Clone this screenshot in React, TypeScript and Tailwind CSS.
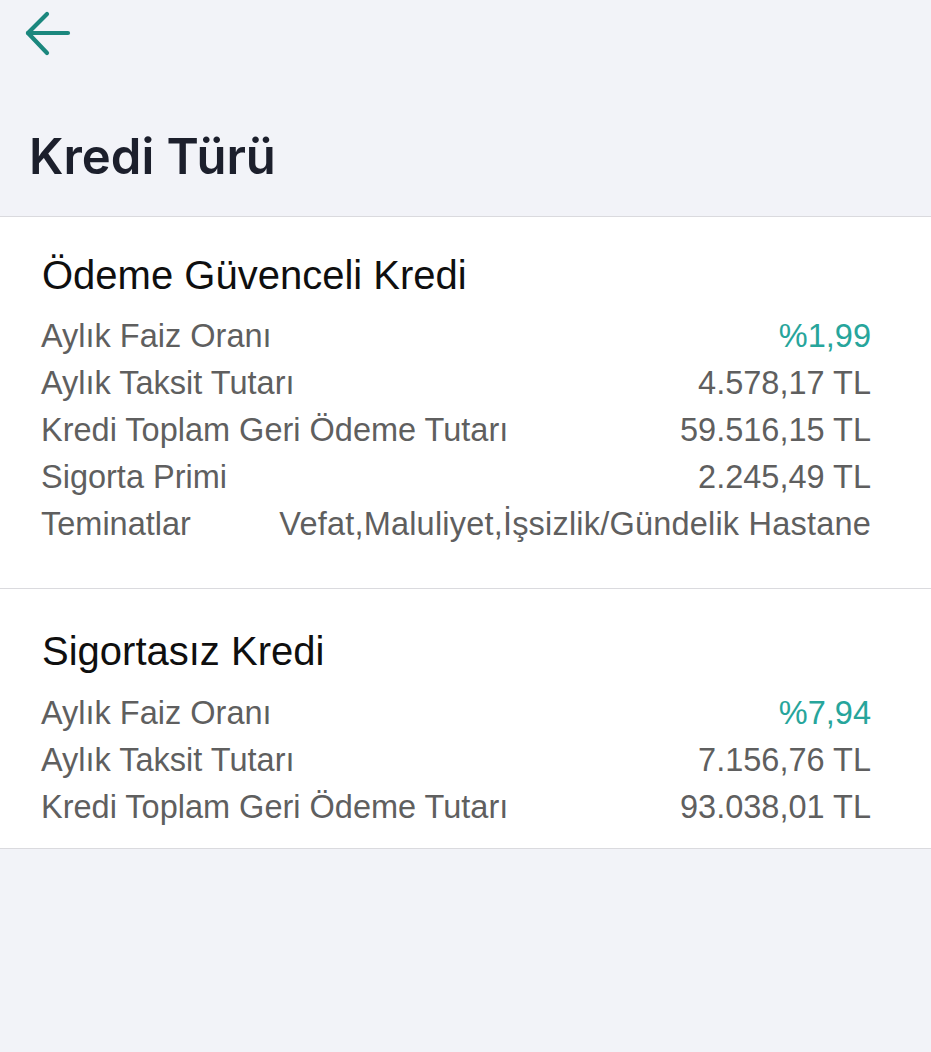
import React from "react";

type Row = { label: string; value: string; accent?: boolean };

const guvenceli: Row[] = [
  { label: "Aylık Faiz Oranı", value: "%1,99", accent: true },
  { label: "Aylık Taksit Tutarı", value: "4.578,17 TL" },
  { label: "Kredi Toplam Geri Ödeme Tutarı", value: "59.516,15 TL" },
  { label: "Sigorta Primi", value: "2.245,49 TL" },
  { label: "Teminatlar", value: "Vefat,Maluliyet,İşsizlik/Gündelik Hastane" },
];

const sigortasiz: Row[] = [
  { label: "Aylık Faiz Oranı", value: "%7,94", accent: true },
  { label: "Aylık Taksit Tutarı", value: "7.156,76 TL" },
  { label: "Kredi Toplam Geri Ödeme Tutarı", value: "93.038,01 TL" },
];

function DetailRows({ rows }: { rows: Row[] }) {
  return (
    <div className="flex flex-col">
      {rows.map((r) => (
        <div key={r.label} className="flex items-center justify-between h-[47px] text-[32.5px] leading-[47px] text-[#5f5f5f]">
          <span>{r.label}</span>
          <span className={r.accent ? "text-[#27a59b]" : r.value.length > 20 ? "tracking-[0.2px]" : ""}>{r.value}</span>
        </div>
      ))}
    </div>
  );
}

export default function App() {
  return (
    <div className="min-h-[1052px] bg-[#f2f3f8] font-['Liberation_Sans',Arial,sans-serif]">
      <div className="flex flex-col pt-[11px] pb-[29px] border-b border-[#dadade]">
        <button className="ml-[25px] w-[46px] h-[46px]">
          <svg width="46" height="46" viewBox="0 0 46 46" fill="none" stroke="#1b877e" strokeWidth="4.2" strokeLinecap="round" strokeLinejoin="round">
            <path d="M3 22H43" />
            <path d="M22 3L3 22L22 42" />
          </svg>
        </button>
        <h1 className="mt-[70px] ml-[29px] font-['Inter',sans-serif] font-semibold text-[49px] leading-[60px] text-[#1c1f2c]">
          Kredi Türü
        </h1>
      </div>

      <section className="bg-white pl-[41px] pr-[60px] pt-[36px] pb-[40px] border-b border-[#dadade]">
        <h2 className="text-[40px] leading-[44px] text-[#0f0f0f] ml-[1px] mb-[16px]">Ödeme Güvenceli Kredi</h2>
        <DetailRows rows={guvenceli} />
      </section>

      <section className="bg-white pl-[41px] pr-[60px] pt-[40px] pb-[17px] border-b border-[#dadade]">
        <h2 className="text-[40px] leading-[44px] text-[#0f0f0f] ml-[1px] mb-[17px]">Sigortasız Kredi</h2>
        <DetailRows rows={sigortasiz} />
      </section>
    </div>
  );
}
